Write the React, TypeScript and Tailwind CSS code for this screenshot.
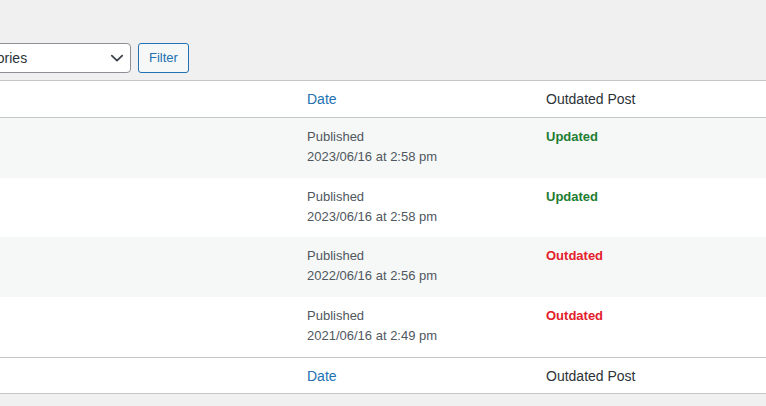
import React from "react";

const rows = [
  { date: "2023/06/16 at 2:58 pm", status: "Updated", bg: "bg-[#f6f7f7]", h: "h-[60px]" },
  { date: "2023/06/16 at 2:58 pm", status: "Updated", bg: "bg-white", h: "h-[59px]" },
  { date: "2022/06/16 at 2:56 pm", status: "Outdated", bg: "bg-[#f6f7f7]", h: "h-[60px]" },
  { date: "2021/06/16 at 2:49 pm", status: "Outdated", bg: "bg-white", h: "h-[60px]" },
];

function HeadRow({ h, border, pad }: { h: string; border: string; pad: string }) {
  return (
    <div className={`grid grid-cols-[297px_239px_1fr] items-center bg-white ${h} ${border} ${pad} border-[#c3c4c7]`}>
      <div />
      <div className="px-[10px] text-[14px] text-[#2271b1]">Date</div>
      <div className="px-[10px] text-[14px] text-[#2c3338]">Outdated Post</div>
    </div>
  );
}

export default function App() {
  return (
    <div
      className="w-full h-[406px] overflow-hidden bg-[#f0f0f1]"
      style={{ fontFamily: '"Liberation Sans", Arial, sans-serif' }}
    >
      <div className="flex items-center gap-[7px] pt-[43px]">
        <div className="-ml-[69px] flex h-[30px] w-[200px] items-center justify-between rounded-[4px] border border-[#8c8f94] bg-white pl-[8px] pr-[6px] text-[14px] text-[#2c3338]">
          <span>All Categories</span>
          <svg width="14" height="14" viewBox="0 0 14 14" fill="none">
            <path d="M1.8 4.6 L7 9.6 L12.2 4.6" stroke="#3c434a" strokeWidth="1.8" strokeLinecap="round" strokeLinejoin="round" />
          </svg>
        </div>
        <div className="flex h-[30px] items-center rounded-[3px] border border-[#2271b1] bg-[#f6f7f7] px-[10px] text-[13px] text-[#2271b1]">
          Filter
        </div>
      </div>
      <div className="mt-[7px] border-t border-[#c3c4c7]">
        <HeadRow h="h-[37px]" border="border-b" pad="pt-[1px]" />
        {rows.map((r, i) => (
          <div key={i} className={`grid grid-cols-[297px_239px_1fr] ${r.bg} ${r.h}`}>
            <div />
            <div className="px-[10px] pt-[9px] text-[13px] leading-[19.5px] text-[#50575e]">
              <div>Published</div>
              <div>{r.date}</div>
            </div>
            <div
              className={`px-[10px] pt-[9px] text-[13px] leading-[19.5px] font-bold ${
                r.status === "Updated" ? "text-[#1e7d32]" : "text-[#e3202b]"
              }`}
            >
              {r.status}
            </div>
          </div>
        ))}
        <HeadRow h="h-[37px]" border="border-y" pad="pt-[2px]" />
      </div>
    </div>
  );
}
